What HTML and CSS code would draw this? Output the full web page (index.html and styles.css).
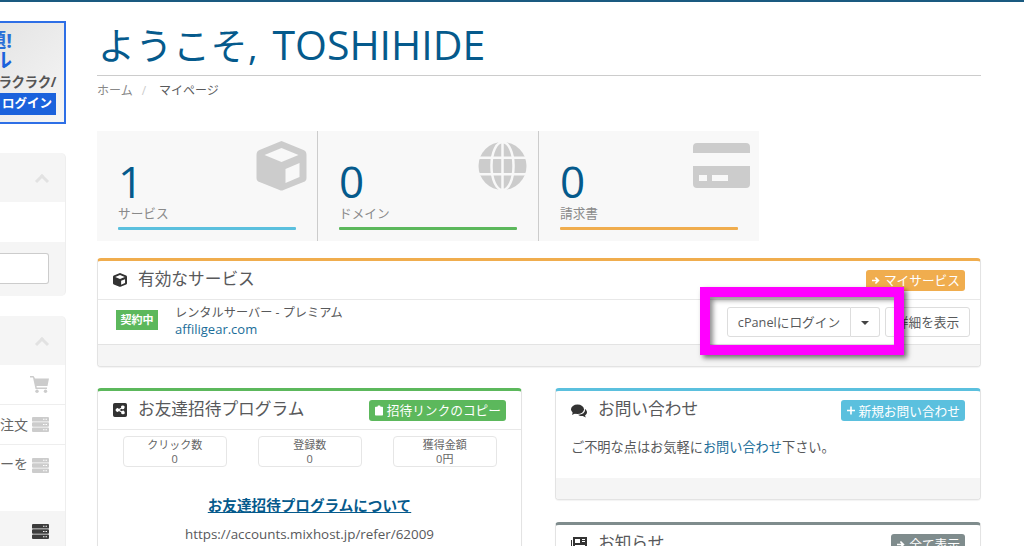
FILE: index.html
```html
<!DOCTYPE html>
<html lang="ja">
<head>
<meta charset="utf-8">
<title>マイページ</title>
<link rel="stylesheet" href="styles.css">
</head>
<body>
<svg class="defs" width="0" height="0">
  <symbol id="i-cube" viewBox="0 0 50 50"><path d="M25 0 47 9q3 1 3 5v23q0 3-3 4L27 49q-2 1-4 0L3 41q-3-1-3-4V14q0-4 3-5Zm0 7L8 14l17 7 17-7Zm4 21v14l14-6V22Z" fill-rule="evenodd"/></symbol>
  <symbol id="i-globe" viewBox="0 0 50 50"><circle cx="25" cy="25" r="25"/><g fill="none" stroke="#f8f8f8" stroke-width="2.600"><ellipse cx="25" cy="25" rx="11.500" ry="25"/><path d="M0 16.500h50M0 33.500h50M25 0v50"/></g></symbol>
  <symbol id="i-card" viewBox="0 0 57 45"><path d="M4 0h49q4 0 4 4v6H0V4q0-4 4-4ZM0 23h57v18q0 4-4 4H4q-4 0-4-4Zm6 9v6h8v-6Zm13 0v6h16v-6Z" fill-rule="evenodd"/></symbol>
  <symbol id="i-share" viewBox="0 0 12 12"><path d="M1.500 0h9Q12 0 12 1.500v9q0 1.500-1.500 1.500h-9Q0 12 0 10.500v-9Q0 0 1.500 0ZM8.500 2.200a1.500 1.500 0 0 0-1.500 1.900L5 5.200a1.500 1.500 0 1 0 0 1.600l2 1.100a1.500 1.500 0 1 0 .5-.9L5.500 6 7.500 4.900a1.500 1.500 0 1 0 1-2.700Z" fill-rule="evenodd"/></symbol>
  <symbol id="i-comments" viewBox="0 0 16 13"><ellipse cx="6.500" cy="4.800" rx="6.500" ry="4.800"/><path d="M2 7 1 10.500 6 8Z"/><path d="M14 4.500c1.500 1 2 2.300 2 3.300 0 1.300-.8 2.400-2 3.100l.8 2-3-1.500c-2 .2-3.700-.3-4.800-1.200 4 .2 7.500-2 7-5.700Z"/></symbol>
  <symbol id="i-news" viewBox="0 0 16 14"><path d="M2 0h14v12q0 2-2 2H2q-2 0-2-2V3h1v9q0 1 1 1t0-1Zm2 2v4h5V2Zm7 0v1h3V2Zm0 2v1h3V4ZM4 8v1h10V8Zm0 2v1h10v-1Z" fill-rule="evenodd"/></symbol>
  <symbol id="i-cart" viewBox="0 0 19 17"><path d="M0 0h3q1 0 1.200 1L5 2.500h14L17.500 10H6.500l.3 1.500H17V13H5.500L3 1.500H0Z"/><circle cx="7" cy="15.300" r="1.700"/><circle cx="15.500" cy="15.300" r="1.700"/></symbol>
  <symbol id="i-server" viewBox="0 0 17 15"><path d="M1 0h15q1 0 1 1v3q0 .6-1 .6H1Q0 4.600 0 4V1q0-1 1-1Zm10 1.800v1h1.500v-1Zm2.500 0v1H15v-1ZM1 5.200h15q1 0 1 1v2.600q0 1-1 1H1q-1 0-1-1V6.200q0-1 1-1Zm10 1.800v1h1.500V7Zm2.500 0v1H15V7ZM1 10.400h15q1 0 1 1V14q0 1-1 1H1q-1 0-1-1v-2.600q0-1 1-1Zm10 1.800v1h1.500v-1Zm2.500 0v1H15v-1Z" fill-rule="evenodd"/></symbol>
  <symbol id="i-arrow" viewBox="0 0 10 10"><path d="M0 4h5.500L3.500 2 5 .7 9.500 5 5 9.300 3.500 8l2-2H0Z"/></symbol>
  <symbol id="i-clip" viewBox="0 0 11 14"><path d="M1 2h2.500V1q0-1 1-1h2q1 0 1 1v1H10q1 0 1 1v10q0 1-1 1H1q-1 0-1-1V3q0-1 1-1Z"/></symbol>
  <symbol id="i-plus" viewBox="0 0 10 10"><path d="M4 0h2v4h4v2H6v4H4V6H0V4h4Z"/></symbol>
</svg>
<div class="topline"></div>
<div class="page">
  <aside class="sidebar">
    <div class="banner">
      <div class="b-a"><span>題!</span></div>
      <div class="b-b"><span>ル</span></div>
      <div class="b-c"><span>ラクラク/</span></div>
      <div class="b-d">ログイン</div>
    </div>
    <section class="side-panel side-first">
      <div class="side-head"><span class="chev"></span></div>
      <div class="side-row side-empty"></div>
      <div class="side-foot"><div class="side-input"></div></div>
    </section>
    <section class="side-panel side-second">
      <div class="side-head"><span class="chev"></span></div>
      <div class="side-row"><svg class="ic-cart"><use href="#i-cart"/></svg></div>
      <div class="side-row"><span>注文</span><svg class="ic-server"><use href="#i-server"/></svg></div>
      <div class="side-row side-tall"><span>ーを</span><svg class="ic-server"><use href="#i-server"/></svg></div>
      <div class="side-end"><svg class="ic-server dark"><use href="#i-server"/></svg></div>
    </section>
  </aside>
  <main class="main">
    <h1 class="title"><span class="kana">ようこそ,</span> <span class="latin">TOSHIHIDE</span></h1>
    <nav class="crumb"><a>ホーム</a><span class="sep">/</span><span>マイページ</span></nav>
    <div class="tiles">
      <div class="tile">
        <svg class="t-ic t-cube"><use href="#i-cube"/></svg>
        <div class="num">1</div><div class="lbl">サービス</div><div class="bar blue"></div>
      </div>
      <div class="tile">
        <svg class="t-ic t-globe"><use href="#i-globe"/></svg>
        <div class="num">0</div><div class="lbl">ドメイン</div><div class="bar green"></div>
      </div>
      <div class="tile last">
        <svg class="t-ic t-card"><use href="#i-card"/></svg>
        <div class="num">0</div><div class="lbl">請求書</div><div class="bar orange"></div>
      </div>
    </div>
    <section class="panel p-orange active">
      <header class="p-head">
        <svg class="p-ic"><use href="#i-cube"/></svg>
        <h3>有効なサービス</h3>
        <a class="tag t-orange"><svg class="tag-ic"><use href="#i-arrow"/></svg>マイサービス</a>
      </header>
      <div class="svc">
        <span class="status">契約中</span>
        <div class="svc-text"><div>レンタルサーバー - プレミアム</div><a>affiligear.com</a></div>
        <div class="btns">
          <div class="split"><button class="btn">cPanelにログイン</button><button class="btn caret-btn"><i class="caret"></i></button></div>
          <button class="btn detail">詳細を表示</button>
        </div>
      </div>
      <div class="p-foot"></div>
    </section>
    <div class="cols">
      <div class="col-left">
        <section class="panel p-green">
          <header class="p-head">
            <svg class="p-ic"><use href="#i-share"/></svg>
            <h3>お友達招待プログラム</h3>
            <a class="tag t-green"><svg class="tag-ic"><use href="#i-clip"/></svg>招待リンクのコピー</a>
          </header>
          <div class="stats">
            <div class="stat"><div>クリック数</div><div>0</div></div>
            <div class="stat"><div>登録数</div><div>0</div></div>
            <div class="stat"><div>獲得金額</div><div>0円</div></div>
          </div>
          <div class="ref-title"><a>お友達招待プログラムについて</a></div>
          <div class="ref-url">https://accounts.mixhost.jp/refer/62009</div>
        </section>
      </div>
      <div class="col-right">
        <section class="panel p-blue">
          <header class="p-head nob">
            <svg class="p-ic wide"><use href="#i-comments"/></svg>
            <h3>お問い合わせ</h3>
            <a class="tag t-blue"><svg class="tag-ic"><use href="#i-plus"/></svg>新規お問い合わせ</a>
          </header>
          <p class="msg">ご不明な点はお気軽に<a>お問い合わせ</a>下さい。</p>
          <div class="p-foot tall"></div>
        </section>
        <section class="panel p-gray">
          <header class="p-head">
            <svg class="p-ic wide"><use href="#i-news"/></svg>
            <h3>お知らせ</h3>
            <a class="tag t-gray"><svg class="tag-ic"><use href="#i-arrow"/></svg>全て表示</a>
          </header>
        </section>
      </div>
    </div>
  </main>
</div>
<div class="highlight"></div>
</body>
</html>
```
FILE: styles.css
```css
* { box-sizing: border-box; }
html, body { margin: 0; height: 546px; overflow: hidden; }
body { background: #fff; color: #58595b; font: 13px/1.42 "Open Sans", "Noto Sans CJK JP", sans-serif; position: relative; }
.defs { position: absolute; }
.topline { height: 2px; background: #1a5a80; }
.page { display: flex; gap: 31px; height: 544px; overflow: hidden; }

.sidebar { width: 66px; flex: none; padding-top: 19px; }
.banner { height: 103px; border: 2px solid #2e6fe6; border-left: 0; background: linear-gradient(135deg, #e4e4e4, #f6f6f6); overflow: hidden; white-space: nowrap; font-weight: 700; }
.b-a, .b-b, .b-c { display: flex; justify-content: flex-end; }
.b-a span, .b-b span, .b-c span { flex: none; }
.b-a { font-size: 20px; line-height: 22px; margin-top: 7px; color: #2a6fd8; padding-right: 52px; }
.b-b { font-size: 20px; line-height: 22px; margin-top: -2px; color: #1b62dc; padding-right: 52px; }
.b-c { font-size: 13.500px; line-height: 14px; margin-top: 3px; padding-right: 8px; color: #555; letter-spacing: -.4px; }
.b-d { background: #1b62dc; color: #fff; font-size: 12.500px; line-height: 22px; margin: 4px 8px 0 0; padding-right: 4px; text-align: right; }

.side-panel { border-radius: 0 5px 5px 0; background: #f5f5f5; overflow: hidden; border-right: 1px solid #eee; }
.side-first { margin-top: 29px; height: 143px; }
.side-second { margin-top: 20px; height: 240px; border-radius: 0 5px 0 0; }
.side-head { height: 49px; display: flex; justify-content: flex-end; align-items: center; padding-right: 18px; }
.chev { width: 10px; height: 10px; border: solid #e2e2e2; border-width: 3px 0 0 3px; transform: rotate(45deg); margin-top: 6px; }
.side-row { height: 40px; background: #fff; border-bottom: 1px solid #eee; display: flex; justify-content: flex-end; align-items: center; gap: 4px; padding-right: 16px; font-size: 14px; color: #666; white-space: nowrap; overflow: hidden; }
.side-row svg { flex: none; }
.side-empty { border-bottom: 0; }
.side-tall { height: 66px; align-items: flex-start; padding-top: 9px; border-bottom: 0; }
.side-tall svg { margin-top: 4px; }
.side-foot { padding-top: 11px; }
.side-input { width: 49px; height: 31px; background: #fff; border: 1px solid #ccc; border-left: 0; border-radius: 0 3px 3px 0; }
.side-end { display: flex; justify-content: flex-end; padding: 13px 16px 0 0; }
.ic-cart { width: 19px; height: 17px; fill: #ccc; }
.ic-server { width: 17px; height: 15px; fill: #ccc; }
.ic-server.dark { fill: #3c3c3c; }

.main { width: 884px; flex: none; }
.title { margin: 19px 0 0; height: 55px; border-bottom: 1px solid #ccc; padding-left: 1px; font-size: 36px; line-height: 46px; font-weight: 400; color: #055a8c; white-space: nowrap; word-spacing: 5px; }
.kana { font-size: 37px; letter-spacing: .5px; }
.latin { font-size: 41px; }
.crumb { height: 55px; padding-top: 6px; font-size: 12px; line-height: 18px; color: #58595b; }
.crumb a { color: #888; }
.sep { color: #ccc; margin: 0 13px 0 9px; }

.tiles { display: flex; width: 662px; height: 110px; background: #f8f8f8; }
.tile { width: 221px; border-right: 1px solid #ccc; padding: 27px 21px 0; position: relative; }
.tile.last { width: 220px; border-right: 0; }
.num { font-size: 44px; line-height: 46px; color: #055a8c; }
.lbl { font-size: 12.700px; line-height: 18px; color: #8a8a8a; }
.bar { height: 3px; width: 178px; margin-top: 5px; border-radius: 1px; }
.blue { background: #5bc0de; } .green { background: #5cb85c; } .orange { background: #f0ad4e; }
.t-ic { position: absolute; fill: #ccc; }
.t-cube { left: 159px; top: 10px; width: 51px; height: 50px; }
.t-globe { left: 160px; top: 11px; width: 49px; height: 48px; }
.t-card { left: 154px; top: 12px; width: 57px; height: 45px; }

.panel { border: 1px solid #e3e3e3; border-top-width: 3px; border-radius: 4px; background: #fff; box-shadow: 0 1px 1px rgba(0,0,0,.05); overflow: hidden; }
.p-orange { border-top-color: #f0ad4e; } .p-green { border-top-color: #5cb85c; }
.p-blue { border-top-color: #5bc0de; } .p-gray { border-top-color: #7f8c8d; }
.active { margin-top: 17px; height: 109px; }
.p-head { height: 39px; border-bottom: 1px solid #e8e8e8; display: flex; align-items: center; padding: 0 15px; }
.p-head.nob { border-bottom: 0; }
.p-head h3 { margin: 0 0 3px; font-size: 16.700px; font-weight: 400; color: #58595b; flex: 1; line-height: 24px; }
.p-ic { width: 14px; height: 14px; fill: #333; margin-right: 11px; flex: none; }
.p-ic.wide { width: 16px; }
.tag { display: flex; align-items: center; gap: 4px; font-size: 12.700px; line-height: 20px; height: 21px; padding: 0 5px 0 6px; border-radius: 3px; color: #fff; white-space: nowrap; }
.tag-ic { width: 8px; height: 11px; fill: #fff; flex: none; }
.t-orange { background: #f0ad4e; } .t-green { background: #5cb85c; } .t-blue { background: #5bc0de; } .t-gray { background: #7f8c8d; }
.svc { height: 44px; display: flex; align-items: center; padding: 0 10px 0 18px; font-size: 12.200px; line-height: 16px; }
.status { background: #5cb85c; color: #fff; font-size: 11px; font-weight: 700; line-height: 20px; width: 42px; text-align: center; margin-bottom: 4px; }
.svc-text { margin: 0 0 1px 17px; flex: 1; color: #58595b; }
.svc-text a { color: #1a6d99; font-size: 13px; }
.btns { display: flex; gap: 5px; margin-bottom: 1px; }
.split { display: flex; }
.btn { height: 30px; background: #fff; border: 1px solid #ddd; border-radius: 3px; font: 12.700px "Open Sans", "Noto Sans CJK JP", sans-serif; color: #58595b; padding: 0 10px; }
.split .btn:first-child { border-radius: 3px 0 0 3px; width: 124px; padding: 0; }
.caret-btn { border-left: 0; border-radius: 0 3px 3px 0; width: 29px; padding: 0; }
.caret { display: inline-block; border: 4px solid transparent; border-top-color: #444; border-bottom: 0; vertical-align: middle; }
.detail { width: 85px; padding: 0; }
.p-foot { height: 22px; background: #f5f5f5; border-top: 1px solid #e3e3e3; }

.cols { display: flex; gap: 33px; margin-top: 21px; align-items: flex-start; }
.col-left { width: 425px; flex: none; }
.col-right { width: 426px; flex: none; }
.p-green { height: 200px; }
.stats { display: flex; gap: 31.500px; padding: 6px 0 0 25px; }
.stat { width: 103.500px; height: 31px; padding-top: 1px; border: 1px solid #e6e6e6; border-radius: 4px; text-align: center; font-size: 11px; line-height: 14px; color: #666; }
.ref-title { text-align: center; margin-top: 27px; font-size: 14.600px; font-weight: 700; line-height: 22px; }
.ref-title a { color: #055a8c; text-decoration: underline; }
.ref-url { text-align: center; margin-top: 9px; font-size: 13.400px; line-height: 18px; }
.msg { margin: 0; height: 48px; padding: 8px 15px 0; font-size: 13.200px; line-height: 18px; white-space: nowrap; }
.msg a { color: #1a6d99; }
.p-foot.tall { height: 21px; border-top: 0; }
.p-gray { margin-top: 22px; height: 100px; }

.highlight { position: absolute; left: 700px; top: 287px; width: 204px; height: 68px; border: 10px solid #f0f; box-shadow: 3px 3px 5px rgba(0,0,0,.55), inset 3px 3px 5px rgba(0,0,0,.45); }
```
